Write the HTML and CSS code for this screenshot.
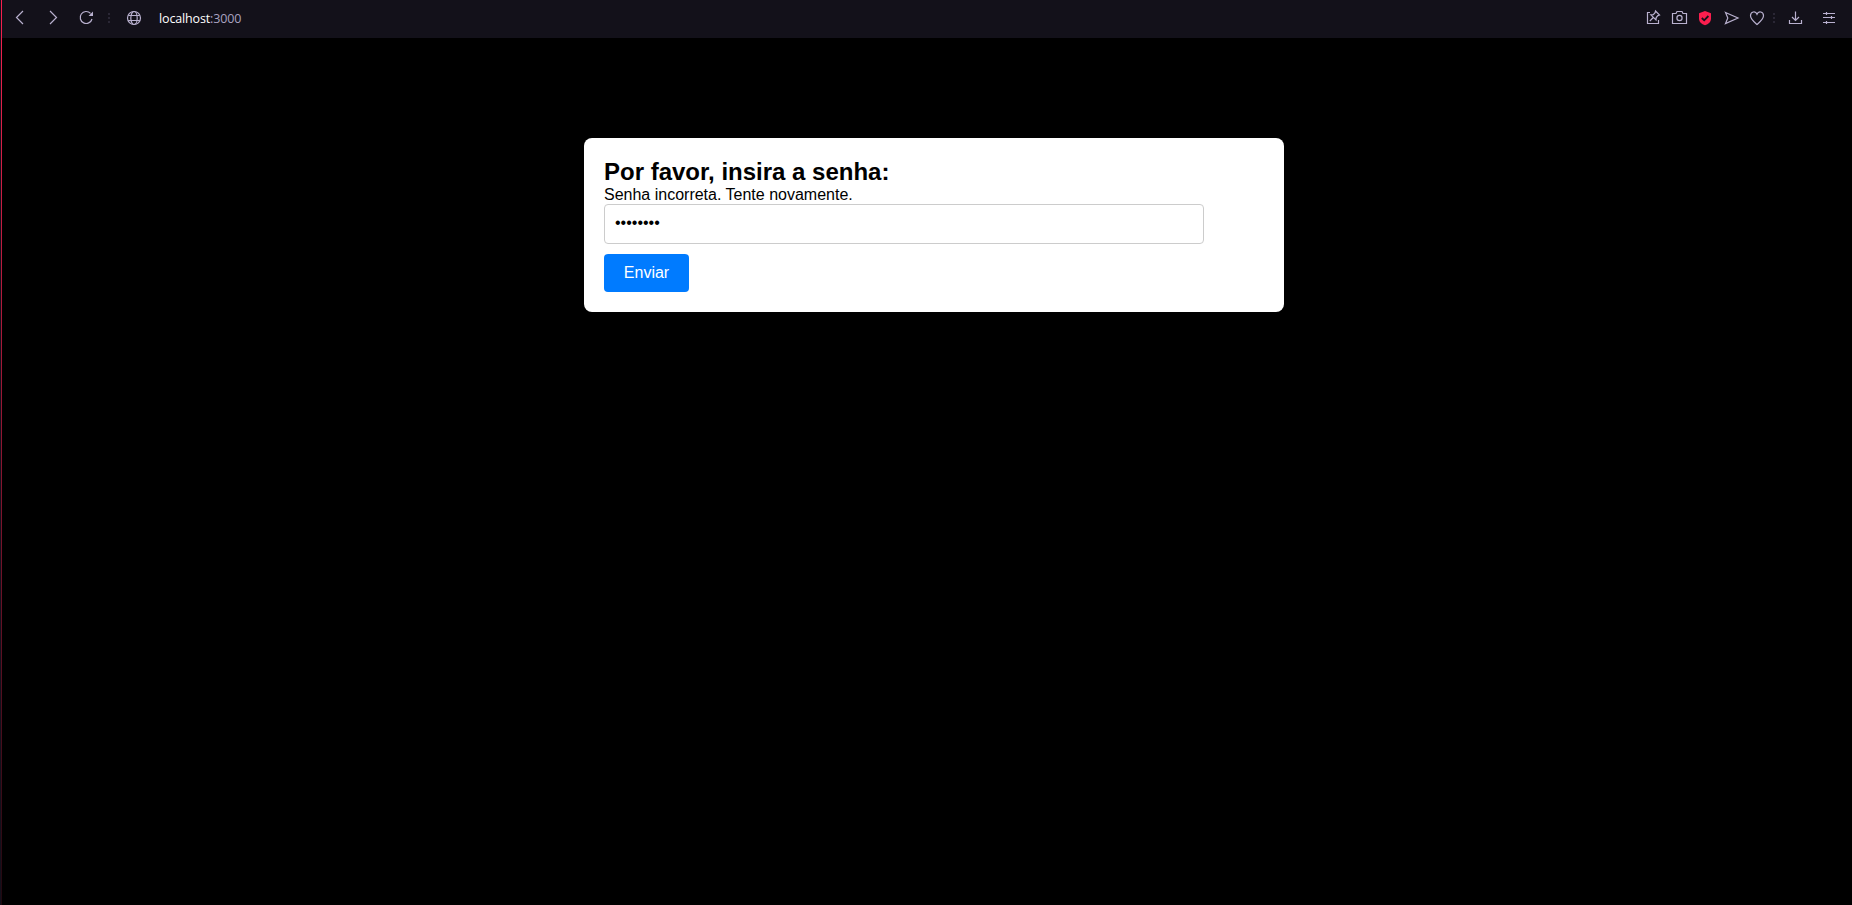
FILE: index.html
```html
<!DOCTYPE html>
<html lang="pt-BR">
<head>
<meta charset="utf-8">
<title>Senha</title>
<link rel="stylesheet" href="styles.css">
</head>
<body>
<div class="window">
  <div class="edge"></div>
  <div class="view">
    <header class="toolbar">
      <svg class="icon back" width="20" height="20" viewBox="0 0 20 20"><path d="M13 4 6.500 10.500 13 17"/></svg>
      <svg class="icon forward" width="20" height="20" viewBox="0 0 20 20"><path d="M7 4 13.500 10.500 7 17"/></svg>
      <svg class="icon reload" width="20" height="20" viewBox="0 0 20 20"><path d="M16 12A6 6 0 1 1 14.500 6.300"/><path d="M17 4.500v4.500h-4.500z" class="solid"/></svg>
      <svg class="dots" width="2" height="10" viewBox="0 0 2 10"><path d="M0 0h2v2H0zM0 4h2v2H0zM0 8h2v2H0z"/></svg>
      <svg class="icon globe" width="20" height="20" viewBox="0 0 20 20"><circle cx="10" cy="11" r="6.500"/><ellipse cx="10" cy="11" rx="3.200" ry="6.500"/><path d="M4.300 8.500h11.400M4.300 13.500h11.400"/></svg>
      <div class="address"><span class="host">localhost</span>:3000</div>
      <div class="actions">
        <svg class="icon" width="20" height="20" viewBox="0 0 20 20"><path d="M7 5.500H4.500v11h11V13"/><path d="m12.500 4 4 4-1.600.6-1.700 2-.2 2.400-5.200-5.200 2.500-.2 1.800-2zM10.300 10.500l-3.500 3.500"/></svg>
        <svg class="icon" width="20" height="20" viewBox="0 0 20 20"><path d="M3.500 6.500h3.500l1-2h5l1 2h3.500v10h-14z"/><circle cx="10.500" cy="11" r="2.600"/></svg>
        <svg class="shield" width="20" height="20" viewBox="0 0 20 20"><path class="body" d="M10 4l6 2.200v5.300c0 3.400-2.500 5.800-6 6.800-3.500-1-6-3.400-6-6.800V6.200z"/><path class="check" d="m6.800 11 2.400 2.300 4.200-4.300"/></svg>
        <svg class="icon" width="20" height="20" viewBox="0 0 20 20"><path d="m4.500 5.500 12.500 5.500-12.500 5.500 2.300-5.500z"/></svg>
        <svg class="icon" width="20" height="20" viewBox="0 0 20 20"><path d="M10 7.200C8.500 3.500 3.500 4.500 3.500 8.800c0 3.500 4 6.500 6.500 8.700 2.500-2.200 6.500-5.200 6.500-8.700 0-4.300-5-5.300-6.500-1.600z"/></svg>
        <svg class="dots" width="2" height="10" viewBox="0 0 2 10"><path d="M0 0h2v2H0zM0 4h2v2H0zM0 8h2v2H0z"/></svg>
        <svg class="icon download" width="20" height="20" viewBox="0 0 20 20"><path d="M10.500 4.500v9M7 10l3.500 3.500L14 10M4.500 13v3.500h12V13"/></svg>
        <svg class="icon sliders" width="20" height="20" viewBox="0 0 20 20"><path d="M4 6.500h12M4 10.500h12M4 15.500h12M7.500 5v3M12.500 9v3M7.500 14v3"/></svg>
      </div>
    </header>
    <main class="page">
      <form class="card">
        <h2 class="title">Por favor, insira a senha:</h2>
        <p class="message">Senha incorreta. Tente novamente.</p>
        <input class="password" type="password" value="password" aria-label="Senha">
        <button class="submit" type="button">Enviar</button>
      </form>
    </main>
  </div>
</div>
</body>
</html>
```
FILE: styles.css
```css
* { box-sizing: border-box; margin: 0; padding: 0; }
body { background: #000; font-family: "Liberation Sans", Arial, sans-serif; overflow: hidden; }
.window { display: flex; height: 100vh; }
.edge { width: 2px; flex: none; border-left: 1px solid #12101a; background: linear-gradient(#fa1e4e 0, #e02049 100px, #1f0810 100%); }
.view { flex: 1; }
.toolbar { height: 38px; padding-top: 7px; background: #13111a; display: flex; align-items: flex-start; }
.toolbar svg { flex: none; }
.icon { fill: none; stroke: #b9b1cf; stroke-width: 1.2; }
.icon .solid { fill: #b9b1cf; stroke: none; }
.back { margin-left: 8px; }
.forward { margin-left: 13px; }
.reload { margin-left: 13px; }
.dots { fill: #2a2735; margin-top: 6px; }
.reload + .dots { margin-left: 12px; }
.globe { margin-left: 14px; }
.address { margin-left: 15px; padding-top: 1px; font: 12.5px/22px "Open Sans", "Noto Sans", sans-serif; letter-spacing: -0.15px; color: #a9a2c0; }
.host { color: #fff; }
.actions { margin-left: auto; margin-right: 13px; display: flex; gap: 6px; }
.actions .dots { margin-left: 0; }
.actions .download { margin-left: 4px; }
.actions .sliders { margin-left: 8px; }
.shield .body { fill: #fa1e4e; }
.shield .check { fill: none; stroke: #13111a; stroke-width: 1.8; }
.page { padding: 100px 0 0 14px; }
.card { width: 700px; height: 174px; margin: 0 auto; padding: 20px; border-radius: 8px; background: #fff; color: #000; }
.title { font-size: 24px; line-height: 28px; }
.message { font-size: 16px; line-height: 18px; }
.password { display: block; width: 600px; height: 40px; padding: 9px 10px 11px; border: 1px solid #ccc; border-radius: 4px; font: 16px "Liberation Sans", Arial, sans-serif; color: #000; outline: none; }
.submit { display: block; margin-top: 10px; width: 85px; height: 38px; border: 0; border-radius: 4px; background: #007bff; color: #fff; font: 16px "Liberation Sans", Arial, sans-serif; }
```
